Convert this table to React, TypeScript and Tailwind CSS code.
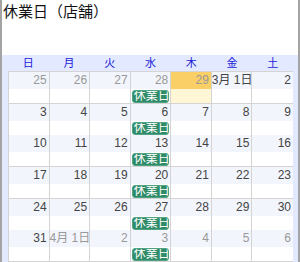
import React from "react";

type Day = { label: string; inMonth: boolean; today?: boolean };

const DAY_NAMES = ["日", "月", "火", "水", "木", "金", "土"];

const d = (label: string | number, inMonth = true, today = false): Day => ({
    label: String(label),
    inMonth,
    today,
});

const WEEKS: Day[][] = [
    [d(25, false), d(26, false), d(27, false), d(28, false), d(29, false, true), d("3月 1日"), d(2)],
    [d(3), d(4), d(5), d(6), d(7), d(8), d(9)],
    [d(10), d(11), d(12), d(13), d(14), d(15), d(16)],
    [d(17), d(18), d(19), d(20), d(21), d(22), d(23)],
    [d(24), d(25), d(26), d(27), d(28), d(29), d(30)],
    [d(31), d("4月 1日", false), d(2, false), d(3, false), d(4, false), d(5, false), d(6, false)],
];

// closed every Wednesday
const HOLIDAY_COL = 3;

const DayCell = ({ day, col }: { day: Day; col: number }) => (
    <div
        className={`flex flex-col min-w-0 ${col < 6 ? "border-r border-[#d4d4d4]" : ""} ${
            day.today ? "bg-[#fff6d6]" : "bg-white"
        }`}
    >
        <div
            className={`h-[17px] leading-[17px] text-[12px] text-right pr-[2px] whitespace-nowrap ${
                day.today ? "bg-[#f9cf66]" : "bg-[#f3f5fc]"
            } ${day.inMonth ? "text-[#444]" : "text-[#999]"}`}
        >
            {day.label}
        </div>
        <div className="flex-1 pt-[1px]">
            {col === HOLIDAY_COL && (
                <div className="mx-[1px] h-[13px] rounded-[3px] border border-[#4fa383] bg-[#2f8b68] text-white text-[12px] leading-[11px] pl-[1px] overflow-hidden whitespace-nowrap">
                    休業日
                </div>
            )}
        </div>
    </div>
);

export default function App() {
    return (
        <div className="w-[300px] h-[262px] flex flex-col overflow-hidden bg-white border-x-2 border-[#a4a4a4] [font-family:'Liberation_Sans','Noto_Sans_CJK_JP',sans-serif]">
            <div className="h-[55px] shrink-0 pl-[1px] pt-[2px] text-[15px] leading-[20px] text-[#111]">
                休業日（店舗）
            </div>
            <div className="flex-1 bg-[#e3e9ff] pl-[6px] pr-[5px]">
                <div className="grid grid-cols-7 h-[16px] text-[11px] leading-[16px] text-center text-[#1c1cd8]">
                    {DAY_NAMES.map((n) => (
                        <div key={n}>{n}</div>
                    ))}
                </div>
                <div className="grid grid-rows-6 h-[191px] border-l border-t border-[#d4d4d4]">
                    {WEEKS.map((week, w) => (
                        <div key={w} className="grid grid-cols-7 border-b border-[#d4d4d4] min-h-0">
                            {week.map((day, i) => (
                                <DayCell key={i} day={day} col={i} />
                            ))}
                        </div>
                    ))}
                </div>
            </div>
        </div>
    );
}
